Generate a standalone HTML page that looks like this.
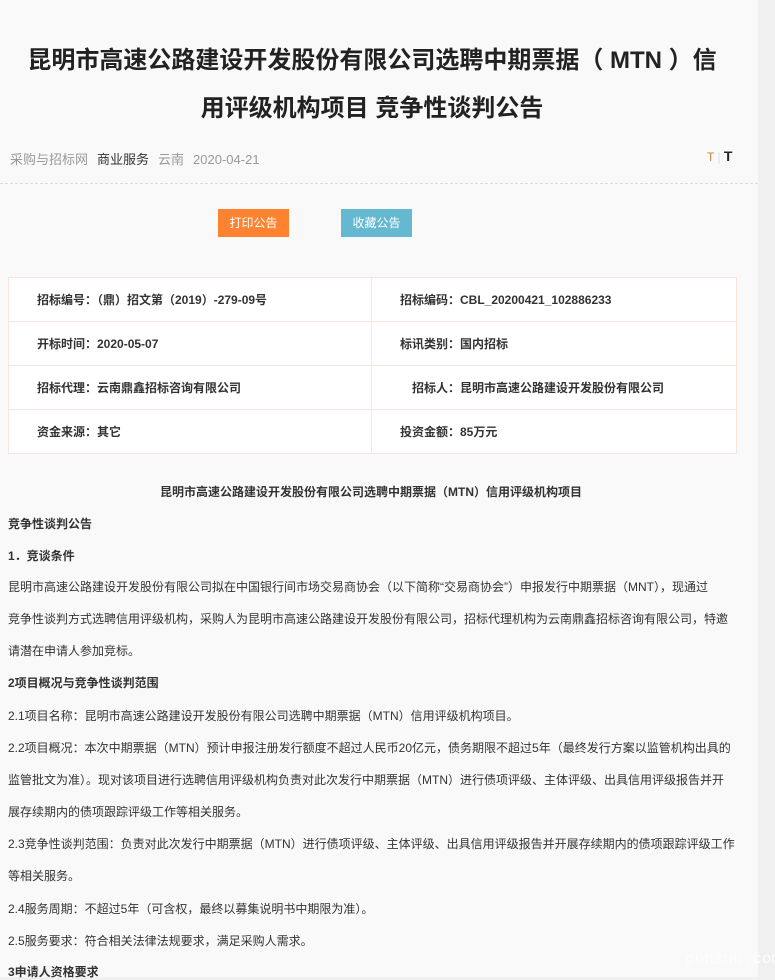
<!DOCTYPE html>
<html><head><meta charset="utf-8"><style>
*{margin:0;padding:0;box-sizing:border-box}
body{width:775px;height:977px;overflow:hidden;background:#f0f0f0;font-family:"Liberation Sans","Noto Sans CJK SC",sans-serif;color:#333}
.page{position:absolute;left:0;top:0;width:758px;height:977px;background:#f9f9f9}
.t{position:absolute;left:0;width:750px;text-align:center;font-size:24px;font-weight:bold;color:#222;white-space:nowrap}
.meta{position:absolute;left:10px;top:149px;font-size:13px;color:#999;white-space:nowrap}
.meta span{margin-right:9px}
.tt{position:absolute;left:707px;top:148px;font-size:12px;white-space:nowrap}
.dash{position:absolute;left:0;top:183px;width:758px;border-top:1px dashed #ddd}
.btn{position:absolute;top:209px;height:28px;width:71px;color:#fff;font-size:12px;text-align:center;line-height:28px}
table{position:absolute;left:8px;top:277px;width:729px;border-collapse:collapse;background:#fff;font-size:12px;font-weight:bold;color:#333}
td{border:1px solid #fbe4da;height:44px;padding-left:28px;white-space:nowrap}
.l{position:absolute;left:8px;font-size:12px;white-space:nowrap;color:#333}
.b{font-weight:bold}
</style></head><body><div class="page">
<div class="t" style="top:40px;left:-3px">昆明市高速公路建设开发股份有限公司选聘中期票据（ MTN ）信</div>
<div class="t" style="top:88px;left:-3px">用评级机构项目 竞争性谈判公告</div>
<div class="meta"><span>采购与招标网</span><span style="color:#333">商业服务</span><span>云南</span><span>2020-04-21</span></div>
<div class="tt"><span style="color:#c8873a">T</span><span style="color:#ddd"> | </span><b style="font-size:14px;color:#222">T</b></div>
<div class="dash"></div>
<div class="btn" style="left:218px;background:#fe8330">打印公告</div>
<div class="btn" style="left:341px;background:#64b8d0">收藏公告</div>
<table>
<tr><td style="width:363px">招标编号：（鼎）招文第（2019）-279-09号</td><td>招标编码：CBL_20200421_102886233</td></tr>
<tr><td>开标时间：2020-05-07</td><td>标讯类别：国内招标</td></tr>
<tr><td>招标代理：云南鼎鑫招标咨询有限公司</td><td style="padding-left:40px">招标人：昆明市高速公路建设开发股份有限公司</td></tr>
<tr><td>资金来源：其它</td><td>投资金额：85万元</td></tr>
</table>
<div class="l b" style="top:483px;left:160px">昆明市高速公路建设开发股份有限公司选聘中期票据（MTN）信用评级机构项目</div>
<div class="l b" style="top:515px">竞争性谈判公告</div>
<div class="l b" style="top:547px">1．竞谈条件</div>
<div class="l" style="top:578px">昆明市高速公路建设开发股份有限公司拟在中国银行间市场交易商协会（以下简称“交易商协会”）申报发行中期票据（MNT），现通过</div>
<div class="l" style="top:610px">竞争性谈判方式选聘信用评级机构，采购人为昆明市高速公路建设开发股份有限公司，招标代理机构为云南鼎鑫招标咨询有限公司，特邀</div>
<div class="l" style="top:642px">请潜在申请人参加竞标。</div>
<div class="l b" style="top:674px">2项目概况与竞争性谈判范围</div>
<div class="l" style="top:707px">2.1项目名称：昆明市高速公路建设开发股份有限公司选聘中期票据（MTN）信用评级机构项目。</div>
<div class="l" style="top:739px">2.2项目概况：本次中期票据（MTN）预计申报注册发行额度不超过人民币20亿元，债务期限不超过5年（最终发行方案以监管机构出具的</div>
<div class="l" style="top:771px">监管批文为准）。现对该项目进行选聘信用评级机构负责对此次发行中期票据（MTN）进行债项评级、主体评级、出具信用评级报告并开</div>
<div class="l" style="top:803px">展存续期内的债项跟踪评级工作等相关服务。</div>
<div class="l" style="top:835px">2.3竞争性谈判范围：负责对此次发行中期票据（MTN）进行债项评级、主体评级、出具信用评级报告并开展存续期内的债项跟踪评级工作</div>
<div class="l" style="top:867px">等相关服务。</div>
<div class="l" style="top:900px">2.4服务周期：不超过5年（可含权，最终以募集说明书中期限为准）。</div>
<div class="l" style="top:932px">2.5服务要求：符合相关法律法规要求，满足采购人需求。</div>
<div class="l b" style="top:963px">3申请人资格要求</div>
</div>
<div style="position:absolute;left:685px;top:950px;font-size:16px;color:#fff;font-family:'Liberation Mono',monospace;opacity:.8">puhzuu.com</div>
</body></html>
